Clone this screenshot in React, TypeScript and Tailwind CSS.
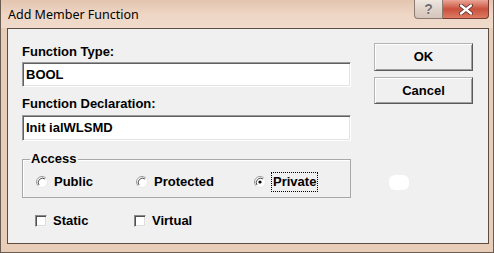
import React from "react";

const font = { fontFamily: '"Liberation Sans", Arial, sans-serif' };

function Radio({ checked }: { checked?: boolean }) {
  return (
    <svg width="12" height="12" viewBox="0 0 12 12" className="shrink-0">
      <circle cx="6" cy="6" r="5.5" fill="#ffffff" />
      <path d="M2.11 9.89 A5.5 5.5 0 0 1 9.89 2.11" fill="none" stroke="#9a9a9a" strokeWidth="1" />
      <path d="M3 9 A4.3 4.3 0 0 1 9 3" fill="none" stroke="#505050" strokeWidth="1" />
      <path d="M9.89 2.11 A5.5 5.5 0 0 1 2.11 9.89" fill="none" stroke="#e8e8e8" strokeWidth="1" />
      {checked && <circle cx="6" cy="6" r="1.6" fill="#000000" />}
    </svg>
  );
}

function Check() {
  return (
    <div className="w-[12px] h-[12px] shrink-0 bg-white border border-t-[#8a8a8a] border-l-[#8a8a8a] border-r-[#f4f4f4] border-b-[#f4f4f4] shadow-[inset_1px_1px_0_#505050,inset_-1px_-1px_0_#dcdcdc]" />
  );
}

function Field({ value, h }: { value: string; h: string }) {
  return (
    <div
      className={`w-[329px] ${h} bg-white border border-t-[#9a9a9a] border-l-[#9a9a9a] border-r-[#ffffff] border-b-[#ffffff] shadow-[inset_1px_1px_0_#606060,inset_-1px_-1px_0_#e3e3e3] flex items-center pl-[3px] text-[13px] font-bold text-black`}
    >
      {value}
    </div>
  );
}

function Button({ label, h }: { label: string; h: string }) {
  return (
    <div
      className={`w-[99px] ${h} flex items-center justify-center bg-[#f0f0f0] border border-t-[#b4b4b4] border-l-[#b4b4b4] border-r-[#5a5a5a] border-b-[#5a5a5a] shadow-[inset_1px_1px_0_#ffffff,inset_-1px_-1px_0_#a0a0a0] text-[13px] font-bold text-black`}
    >
      {label}
    </div>
  );
}

export default function App() {
  return (
    <div
      className="relative w-[494px] h-[253px] flex flex-col bg-[#e8cdb9] border-l border-r border-b border-[#6b5c52] overflow-hidden"
      style={font}
    >
      {/* title bar */}
      <div className="h-[28px] shrink-0 flex items-start justify-between bg-gradient-to-b from-[#e2c5af] via-[#eed6c4] to-[#efdacb]">
        <div
          className="pl-[7px] pt-[6px] text-[12.5px] text-black"
          style={{ fontFamily: '"Noto Sans", "Open Sans", sans-serif' }}
        >
          Add Member Function
        </div>
        <div className="flex mr-[4px] h-[19px]">
          <div className="w-[29px] h-[19px] flex items-center justify-center rounded-bl-[4px] border border-t-0 border-[#8b7b70] bg-gradient-to-b from-[#efe7e1] via-[#e0d3ca] to-[#d6c5b9] text-[14px] font-bold text-[#6d6d6d] [text-shadow:0_0_1px_#ffffff]">
            ?
          </div>
          <div className="w-[46px] h-[19px] flex items-center justify-center rounded-br-[4px] border border-t-0 border-l-0 border-[#7a3b30] bg-gradient-to-b from-[#e9a596] via-[#c9503d] to-[#dd7a62]">
            <svg width="14" height="11" viewBox="0 0 14 11">
              <path d="M2 1.5 L12 9.5 M12 1.5 L2 9.5" stroke="#5a2a22" strokeWidth="4" strokeLinecap="round" />
              <path d="M2 1.5 L12 9.5 M12 1.5 L2 9.5" stroke="#ffffff" strokeWidth="2.4" strokeLinecap="round" />
            </svg>
          </div>
        </div>
      </div>

      {/* client area */}
      <div className="flex-1 ml-[6px] mr-[4px] mb-[8px] border border-[#5c4c42] bg-[#f0f0f0] flex text-[13px] font-bold text-black">
        <div className="pl-[14px] pt-[15px] flex flex-col w-[343px]">
          <div className="leading-[16px]">Function Type:</div>
          <div className="mt-[2px]">
            <Field value="BOOL" h="h-[25px]" />
          </div>
          <div className="leading-[16px] mt-[9px]">Function Declaration:</div>
          <div className="mt-[3px]">
            <Field value="Init ialWLSMD" h="h-[26px]" />
          </div>
          <fieldset className="mt-[10px] w-[329px] h-[47px] border border-[#a8a8a8] shadow-[inset_1px_1px_0_#ffffff]">
            <legend className="ml-[7px] px-[1px] leading-[16px]">Access</legend>
            <div className="flex items-center h-[20px] mt-[5px] pl-[13px]">
              <div className="w-[100px] flex items-center gap-[6px]">
                <Radio />
                <span>Public</span>
              </div>
              <div className="w-[118px] flex items-center gap-[6px]">
                <Radio />
                <span>Protected</span>
              </div>
              <div className="flex items-center gap-[5px]">
                <Radio checked />
                <span className="border border-dotted border-black px-[1px] leading-[18px]">Private</span>
              </div>
            </div>
          </fieldset>
          <div className="flex items-center h-[16px] mt-[15px] pl-[13px]">
            <div className="w-[99px] flex items-center gap-[6px]">
              <Check />
              <span>Static</span>
            </div>
            <div className="flex items-center gap-[6px]">
              <Check />
              <span>Virtual</span>
            </div>
          </div>
        </div>
        <div className="ml-[23px] pt-[14px] flex flex-col gap-[6px]">
          <Button label="OK" h="h-[28px]" />
          <Button label="Cancel" h="h-[27px]" />
        </div>
      </div>

      <div className="absolute left-[388px] top-[175px] w-[20px] h-[15px] rounded-[6px] bg-white" />
    </div>
  );
}
